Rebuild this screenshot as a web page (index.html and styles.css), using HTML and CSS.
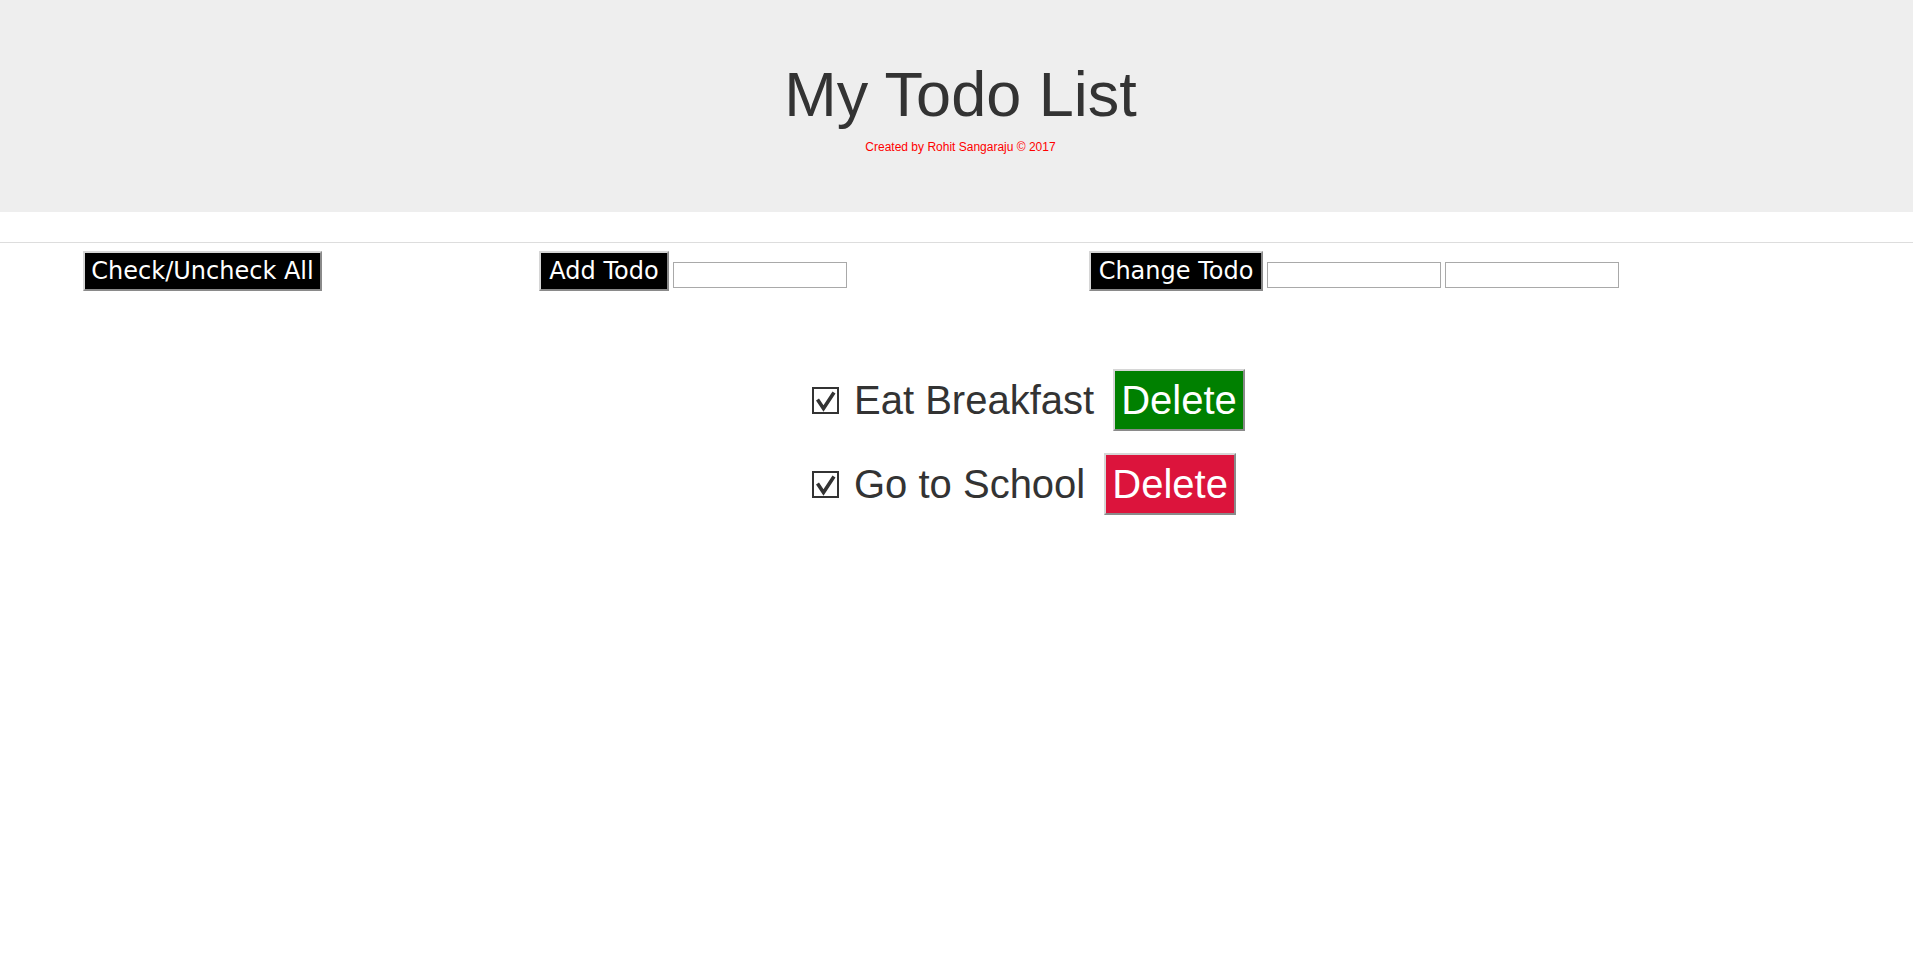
FILE: index.html
```html
<!DOCTYPE html>
<html lang="en">
<head>
<meta charset="utf-8">
<title>My Todo List</title>
<link rel="stylesheet" href="styles.css">
</head>
<body>
<header class="masthead">
  <h1 class="title">My Todo List</h1>
  <p class="credit">Created by Rohit Sangaraju © 2017</p>
</header>
<div class="spacer"></div>
<section class="controls">
  <div class="group">
    <button class="btn-dark btn-check">Check/Uncheck All</button>
  </div>
  <div class="group">
    <button class="btn-dark btn-add">Add Todo</button>
    <input class="field" type="text">
  </div>
  <div class="group">
    <button class="btn-dark btn-change">Change Todo</button>
    <input class="field" type="text">
    <input class="field" type="text">
  </div>
</section>
<ul class="todos">
  <li class="todo">
    <svg class="tick" viewBox="0 0 27 27" aria-hidden="true"><rect x="1" y="1" width="25" height="25" fill="none" stroke="#333" stroke-width="2"/><path d="M5.5 12.5 L11.5 21.5 L22 5.5" fill="none" stroke="#333" stroke-width="3.6" stroke-linecap="butt" stroke-linejoin="miter"/></svg>
    <span class="todo-text">Eat Breakfast</span>
    <button class="btn-delete btn-green">Delete</button>
  </li>
  <li class="todo">
    <svg class="tick" viewBox="0 0 27 27" aria-hidden="true"><rect x="1" y="1" width="25" height="25" fill="none" stroke="#333" stroke-width="2"/><path d="M5.5 12.5 L11.5 21.5 L22 5.5" fill="none" stroke="#333" stroke-width="3.6" stroke-linecap="butt" stroke-linejoin="miter"/></svg>
    <span class="todo-text">Go to School</span>
    <button class="btn-delete btn-red">Delete</button>
  </li>
</ul>
</body>
</html>
```

FILE: styles.css
```css
body {
  margin: 0;
  font-family: "Liberation Sans", Arial, sans-serif;
  color: #333;
  background: #fff;
}

.masthead {
  height: 212px;
  box-sizing: border-box;
  padding: 58px 0 0 8px;
  background: #eeeeee;
  text-align: center;
}

.title {
  margin: 0;
  font-size: 63px;
  font-weight: normal;
  line-height: 72px;
  color: #333;
}

.credit {
  margin: 10px 0 0;
  font-size: 12px;
  line-height: 14px;
  color: #ff0000;
}

.spacer {
  height: 30px;
  border-bottom: 1px solid #dddddd;
}

.controls {
  display: grid;
  grid-template-columns: 456px 550px auto;
  align-items: start;
  padding: 8px 0 0 83px;
}

.group {
  display: flex;
  align-items: flex-start;
  gap: 4px;
}

.btn-dark {
  height: 40px;
  padding: 0 4px;
  font-family: "DejaVu Sans", Verdana, sans-serif;
  font-size: 24px;
  color: #fff;
  background: #000;
  border: 2px solid;
  border-color: #d6d6d6 #8a8a8a #8a8a8a #d6d6d6;
  white-space: nowrap;
  text-align: center;
}

.btn-check {
  width: 239px;
}

.btn-add {
  width: 130px;
}

.btn-change {
  width: 174px;
}

.field {
  width: 174px;
  height: 26px;
  box-sizing: border-box;
  margin-top: 11px;
  padding: 1px 2px;
  border: 1px solid #a9a9a9;
  background: #fff;
}

.todos {
  list-style: none;
  margin: 78px 0 0;
  padding: 0 0 0 812px;
  display: flex;
  flex-direction: column;
  gap: 22px;
}

.todo {
  display: flex;
  align-items: baseline;
}

.tick {
  width: 27px;
  height: 27px;
  margin-right: 15px;
  flex: none;
}

.todo-text {
  font-size: 40px;
  line-height: 46px;
  color: #333;
  white-space: nowrap;
}

.btn-delete {
  margin-left: 19px;
  padding: 6px;
  font-family: "Liberation Sans", Arial, sans-serif;
  font-size: 40px;
  line-height: 46px;
  color: #fff;
  border: 2px solid;
  border-color: #d6d6d6 #8a8a8a #8a8a8a #d6d6d6;
}

.btn-green {
  background: #008000;
}

.btn-red {
  background: #dc143c;
}
```
